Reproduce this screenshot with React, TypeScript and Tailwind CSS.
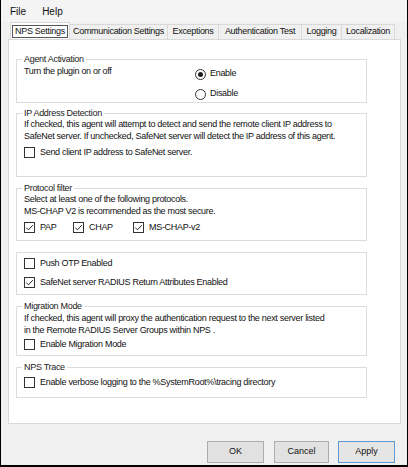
import type { ReactNode } from "react";

function CheckBox({ checked }: { checked?: boolean }) {
  return (
    <span className="flex h-[11px] w-[11px] shrink-0 items-center justify-center border border-[#333333] bg-white">
      {checked && (
        <svg width="9" height="9" viewBox="0 0 9 9">
          <path d="M1.2 4.6 L3.4 6.8 L7.8 2.2" fill="none" stroke="#222222" strokeWidth="1" />
        </svg>
      )}
    </span>
  );
}

function Check({ checked, label, className = "" }: { checked?: boolean; label: string; className?: string }) {
  return (
    <div className={"flex h-[13px] items-center whitespace-nowrap " + className}>
      <CheckBox checked={checked} />
      <span className="ml-[5px]">{label}</span>
    </div>
  );
}

function Radio({ checked, label }: { checked?: boolean; label: string }) {
  return (
    <div className="flex h-[14px] items-center">
      <span className="flex h-[11px] w-[11px] items-center justify-center rounded-full border border-[#333333] bg-white">
        {checked && <span className="h-[5px] w-[5px] rounded-full bg-[#1f1f1f]" />}
      </span>
      <span className="ml-[4px]">{label}</span>
    </div>
  );
}

function Group({ label, className = "", children }: { label?: string; className?: string; children: ReactNode }) {
  return (
    <div className={"relative ml-[7px] w-[351px] border border-[#dcdcdc] pl-[7px] " + className}>
      {label && (
        <span className="absolute -top-[7px] left-[5px] bg-white px-[2px] leading-[13px] text-[#1a1a1a]">{label}</span>
      )}
      {children}
    </div>
  );
}

const tabs = [
  { label: "NPS Settings", w: "w-[60px]" },
  { label: "Communication Settings", w: "w-[98px]" },
  { label: "Exceptions", w: "w-[51px]" },
  { label: "Authentication Test", w: "w-[83px]" },
  { label: "Logging", w: "w-[40px]" },
  { label: "Localization", w: "w-[53px]" },
];

export default function App() {
  return (
    <div className="flex h-[467px] w-[408px] flex-col border-x border-b-2 border-black bg-[#f0f0f0] font-['Liberation_Sans',Arial,sans-serif] text-[9px] tracking-[-0.3px] text-[#111111]">
      {/* menu */}
      <div className="flex h-[22px] items-center gap-[16px] bg-[#f4f4f4] pl-[9px] text-[10px] tracking-normal">
        <span>File</span>
        <span>Help</span>
      </div>

      {/* tabs */}
      <div className="flex h-[17px] items-end pl-[9px]">
        {tabs.map((t, i) =>
          i === 0 ? (
            <div
              key={t.label}
              className={"flex h-[17px] items-center justify-center border border-b-0 border-[#d9d9d9] bg-white " + t.w}
            >
              <span className="border border-[#555555] px-[2px] leading-[11px]">{t.label}</span>
            </div>
          ) : (
            <div
              key={t.label}
              className={"flex h-[15px] items-center justify-center border-y-0 border-t border-r border-[#d9d9d9] border-solid bg-[#f0f0f0] " + t.w}
            >
              {t.label}
            </div>
          )
        )}
      </div>

      {/* tab page */}
      <div className="ml-[7px] h-[385px] w-[393px] border border-[#d9d9d9] bg-white">
        <Group label="Agent Activation" className="mt-[19px] h-[44px]">
          <div className="flex items-start pt-[5px]">
            <div className="w-[171px] leading-[12px]">Turn the plugin on or off</div>
            <div className="mt-[2px] flex flex-col gap-[6px]">
              <Radio checked label="Enable" />
              <Radio label="Disable" />
            </div>
          </div>
        </Group>

        <Group label="IP Address Detection" className="mt-[10px] h-[64px] pt-[4px]">
          <div className="whitespace-nowrap leading-[12px]">
            If checked, this agent will attempt to detect and send the remote client IP address to
          </div>
          <div className="whitespace-nowrap leading-[12px]">
            SafeNet server. If unchecked, SafeNet server will detect the IP address of this agent.
          </div>
          <Check className="mt-[4px]" label="Send client IP address to SafeNet server." />
        </Group>

        <Group label="Protocol filter" className="mt-[11px] h-[53px] pt-[4px]">
          <div className="whitespace-nowrap leading-[12px]">Select at least one of the following protocols.</div>
          <div className="whitespace-nowrap leading-[12px]">MS-CHAP V2 is recommended as the most secure.</div>
          <div className="mt-[4px] flex">
            <Check className="w-[49px]" checked label="PAP" />
            <Check className="w-[60px]" checked label="CHAP" />
            <Check checked label="MS-CHAP-v2" />
          </div>
        </Group>

        <Group className="mt-[11px] h-[43px] pt-[4px]">
          <div className="flex flex-col gap-[6px]">
            <Check label="Push OTP Enabled" />
            <Check checked label="SafeNet server RADIUS Return Attributes Enabled" />
          </div>
        </Group>

        <Group label="Migration Mode" className="mt-[11px] h-[50px] pt-[5px]">
          <div className="whitespace-nowrap leading-[12px]">
            If checked, this agent will proxy the authentication request to the next server listed
          </div>
          <div className="whitespace-nowrap leading-[12px]">in the Remote RADIUS Server Groups within NPS .</div>
          <Check className="mt-[2px]" label="Enable Migration Mode" />
        </Group>

        <Group label="NPS Trace" className="mt-[11px] h-[31px] pt-[8px]">
          <Check label="Enable verbose logging to the %SystemRoot%\tracing directory" />
        </Group>
      </div>

      {/* buttons */}
      <div className="mt-[17px] flex justify-end pr-[12px] tracking-normal">
        <button className="h-[22px] w-[57px] border border-[#adadad] bg-[#e1e1e1]">OK</button>
        <button className="ml-[10px] h-[22px] w-[55px] border border-[#adadad] bg-[#e1e1e1]">Cancel</button>
        <button className="ml-[9px] h-[22px] w-[57px] border border-[#5b9bd5] bg-[#e5e5e5]">Apply</button>
      </div>
    </div>
  );
}
